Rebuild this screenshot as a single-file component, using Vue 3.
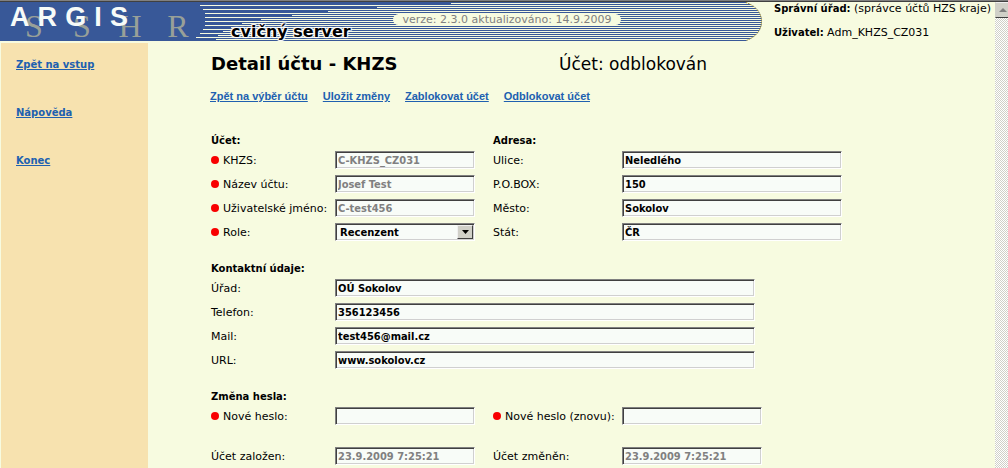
<script setup>
import { reactive } from 'vue'

const form = reactive({
  khzs: 'C-KHZS_CZ031',
  name: 'Josef Test',
  login: 'C-test456',
  role: 'Recenzent',
  street: 'Neledlého',
  pobox: '150',
  city: 'Sokolov',
  state: 'ČR',
  office: 'OÚ Sokolov',
  phone: '356123456',
  mail: 'test456@mail.cz',
  url: 'www.sokolov.cz',
  pass: '',
  pass2: '',
  created: '23.9.2009 7:25:21',
  changed: '23.9.2009 7:25:21'
})

const account = [
  { key: 'khzs', label: 'KHZS:', disabled: true },
  { key: 'name', label: 'Název účtu:', disabled: true },
  { key: 'login', label: 'Uživatelské jméno:', disabled: true }
]
const address = [
  { key: 'street', label: 'Ulice:' },
  { key: 'pobox', label: 'P.O.BOX:' },
  { key: 'city', label: 'Město:' },
  { key: 'state', label: 'Stát:' }
]
const contact = [
  { key: 'office', label: 'Úřad:' },
  { key: 'phone', label: 'Telefon:' },
  { key: 'mail', label: 'Mail:' },
  { key: 'url', label: 'URL:' }
]
const menu = ['Zpět na vstup', 'Nápověda', 'Konec']
const actions = ['Zpět na výběr účtu', 'Uložit změny', 'Zablokovat účet', 'Odblokovat účet']

// left ends of the banner stripes, one per second pixel row
const stripes = [451, 200, 377, 203, 328, 205, 292, 205, 261, 205, 242, 205, 231, 203, 223, 200, 218, 196, 216]
const stripePath = stripes.map((x, i) => `M${x} ${i * 2 + 1}H763v1H${x}z`).join('')
</script>

<template>
  <div class="page">
    <div class="view">
      <header class="top">
        <div class="banner">
          <svg class="stripes" width="763" height="39" viewBox="0 0 763 39" aria-hidden="true">
            <defs>
              <clipPath id="cap"><path d="M0 0H746C756 4 762 11 762 19.500C762 28 756 35 746 39H0z" /></clipPath>
            </defs>
            <g clip-path="url(#cap)" shape-rendering="crispEdges">
              <rect width="763" height="39" fill="#385898" />
              <path :d="stripePath" fill="#f7fbe0" />
            </g>
            <path d="M746 .5C756 4 761.500 11 761.500 19.500C761.500 28 756 35 746 38.500" fill="none" stroke="#b99a20" stroke-dasharray="1 1" />
          </svg>
          <span class="sshr"><span>S</span><span>S</span><span>H</span><span>R</span></span>
          <span class="argis"><span>A</span><span>R</span><span>G</span><span>I</span><span>S</span></span>
          <span class="server">cvičný server</span>
          <span class="version">verze: 2.3.0 aktualizováno: 14.9.2009</span>
        </div>
        <div class="who">
          <div><b>Správní úřad:</b> (správce účtů HZS kraje)</div>
          <div><b>Uživatel:</b> Adm_KHZS_CZ031</div>
        </div>
      </header>
      <div class="body">
        <nav class="side">
          <a v-for="m in menu" :key="m" href="#">{{ m }}</a>
        </nav>
        <main class="main">
          <div class="heading">
            <h1>Detail účtu - KHZS</h1>
            <p>Účet: <span>odblokován</span></p>
          </div>
          <div class="actions">
            <a v-for="a in actions" :key="a" href="#">{{ a }}</a>
          </div>
          <form @submit.prevent>
            <section class="pair">
              <div>
                <h2>Účet:</h2>
                <div v-for="f in account" :key="f.key" class="row">
                  <label :for="f.key"><i class="dot"></i>{{ f.label }}</label>
                  <input :id="f.key" v-model="form[f.key]" type="text" :disabled="f.disabled" />
                </div>
                <div class="row">
                  <label for="role"><i class="dot"></i>Role:</label>
                  <div class="pick">
                    <select id="role" v-model="form.role"><option>Recenzent</option></select>
                    <span class="arrow"><svg width="7" height="4" viewBox="0 0 7 4"><path d="M0 0h7L3.500 4z" /></svg></span>
                  </div>
                </div>
              </div>
              <div class="wide">
                <h2>Adresa:</h2>
                <div v-for="f in address" :key="f.key" class="row">
                  <label :for="f.key">{{ f.label }}</label>
                  <input :id="f.key" v-model="form[f.key]" type="text" />
                </div>
              </div>
            </section>
            <section class="contact">
              <h2>Kontaktní údaje:</h2>
              <div v-for="f in contact" :key="f.key" class="row">
                <label :for="f.key">{{ f.label }}</label>
                <input :id="f.key" v-model="form[f.key]" type="text" />
              </div>
            </section>
            <section>
              <h2>Změna hesla:</h2>
              <div class="pair">
                <div class="row">
                  <label for="pass"><i class="dot"></i>Nové heslo:</label>
                  <input id="pass" v-model="form.pass" type="password" />
                </div>
                <div class="row">
                  <label for="pass2"><i class="dot"></i>Nové heslo (znovu):</label>
                  <input id="pass2" v-model="form.pass2" type="password" />
                </div>
              </div>
            </section>
            <section class="pair">
              <div class="row">
                <label for="created">Účet založen:</label>
                <input id="created" v-model="form.created" type="text" disabled />
              </div>
              <div class="row">
                <label for="changed">Účet změněn:</label>
                <input id="changed" v-model="form.changed" type="text" disabled />
              </div>
            </section>
          </form>
        </main>
      </div>
    </div>
    <div class="scroll">
      <button type="button" aria-label="Nahoru">
        <svg width="8" height="4" viewBox="0 0 8 4"><path d="M4 0L8 4H0z" fill="#808080" /></svg>
      </button>
    </div>
  </div>
</template>

<style>
html,
body {
  height: 100%;
  margin: 0;
  overflow: hidden;
}
#app {
  height: 100%;
}
</style>

<style scoped>
.page {
  box-sizing: border-box;
  display: flex;
  height: 100%;
  overflow: hidden;
  border-top: 1px solid #808080;
  background: #f7fbe0;
  color: #000;
  font: 11px/16px "DejaVu Sans", Verdana, sans-serif;
}
.view {
  flex: 1;
  min-width: 0;
  display: flex;
  flex-direction: column;
  border-top: 1px solid #404040;
}
.top {
  display: flex;
  height: 39px;
  margin-bottom: 2px;
}
.banner {
  position: relative;
  flex: none;
}
.stripes {
  display: block;
}
.argis,
.sshr,
.server,
.version {
  position: absolute;
  white-space: nowrap;
}
.argis {
  display: flex;
  justify-content: space-between;
  left: 10px;
  top: 0;
  width: 118px;
  color: #f7fbf8;
  font: bold 27px/30px "Liberation Sans", Arial, sans-serif;
}
.sshr {
  display: grid;
  grid-template-columns: repeat(4, 48px);
  left: 10px;
  top: 8px;
  color: #98a098;
  font: 32px/32px "Liberation Serif", "Courier New", serif;
  text-align: center;
}
.server {
  left: 231px;
  top: 21px;
  font: bold 16px/18px "DejaVu Sans", Verdana, sans-serif;
  text-shadow: 0 0 1px #fff, 1px 1px 1px #fff, -1px -1px 1px #fff, 1px -1px 1px #fff, -1px 1px 1px #fff, 0 0 2px #ccc;
}
.version {
  box-sizing: border-box;
  left: 393px;
  top: 12px;
  width: 228px;
  border-radius: 6px;
  background: #f7fbe0;
  color: #808080;
  line-height: 11px;
  text-align: center;
}
.who {
  margin-left: 11px;
  white-space: nowrap;
}
.who div {
  height: 14px;
  line-height: 14px;
  margin-bottom: 10px;
}
b,
h2,
select,
.side a {
  font: bold 10px/16px "DejaVu Sans", Verdana, sans-serif;
}
.who b {
  line-height: 12px;
}
.body {
  flex: 1;
  display: flex;
  min-height: 0;
}
.side {
  box-sizing: border-box;
  flex: none;
  display: flex;
  flex-direction: column;
  align-items: flex-start;
  gap: 32px;
  width: 147px;
  margin-left: 1px;
  padding: 14px 15px;
  background: #f7e2af;
}
a {
  color: #2060b0;
}
.main {
  flex: 1;
  min-width: 0;
  padding-left: 63px;
}
.heading {
  display: flex;
  align-items: center;
  height: 42px;
}
h1,
h2,
.heading p {
  margin: 0;
}
h1 {
  width: 348px;
  font-size: 18px;
  line-height: 24px;
}
.heading p {
  font-size: 17px;
  line-height: 24px;
}
.actions {
  display: flex;
  gap: 15px;
  margin: 3px 0 0 -1px;
  font: bold 11px/16px "Liberation Sans", Arial, sans-serif;
}
form {
  display: flex;
  flex-direction: column;
  gap: 16px;
  margin-top: 28px;
}
h2 {
  height: 16px;
  line-height: 18px;
}
.pair {
  display: grid;
  grid-template-columns: 282px 1fr;
}
.row {
  display: flex;
  align-items: center;
  height: 24px;
}
label {
  display: flex;
  align-items: center;
  flex: none;
  width: 124px;
  padding-top: 2px;
  white-space: nowrap;
}
.pair > :nth-child(2) label {
  width: 129px;
}
.dot {
  width: 8px;
  height: 8px;
  margin: 0 4px 2px 0;
  border-radius: 4px;
  background: #f80000;
}
input,
.pick {
  box-sizing: border-box;
  width: 140px;
  height: 18px;
  border: 1px solid;
  border-color: #808080 #fff #fff #808080;
  border-radius: 0;
  background: #f8fcf8;
  box-shadow: inset 1px 1px 0 #404040, inset -1px -1px 0 #d0d0d0;
}
input {
  padding: 0 2px;
  color: #000;
  font: bold 11px/16px "DejaVu Sans Condensed", "DejaVu Sans", Verdana, sans-serif;
}
input:disabled {
  color: #808080;
}
.wide input {
  width: 220px;
}
.contact input {
  width: 420px;
}
.pick {
  display: flex;
  position: relative;
}
select {
  flex: 1;
  padding: 1px 4px 0;
  border: 0;
  background: none;
  color: #000;
  appearance: none;
}
.arrow {
  position: absolute;
  right: 1px;
  top: 1px;
  bottom: 1px;
  box-sizing: border-box;
  display: flex;
  align-items: center;
  justify-content: center;
  width: 16px;
  border: 1px solid;
  border-color: #f0f0f0 #404040 #404040 #f0f0f0;
  background: #d0d0c8;
  pointer-events: none;
}
.scroll {
  flex: none;
  width: 13px;
  overflow: hidden;
  border-top: 1px solid #404040;
  background: repeating-conic-gradient(#d0d0c8 0 25%, #fff 0 50%) 0 0 / 2px 2px;
}
.scroll button {
  display: flex;
  align-items: center;
  box-sizing: border-box;
  width: 16px;
  height: 16px;
  padding: 0 3px;
  border: 1px solid;
  border-color: #f0f0f0 #404040 #404040 #d0d0c8;
  background: #d0d0c8;
}
</style>
